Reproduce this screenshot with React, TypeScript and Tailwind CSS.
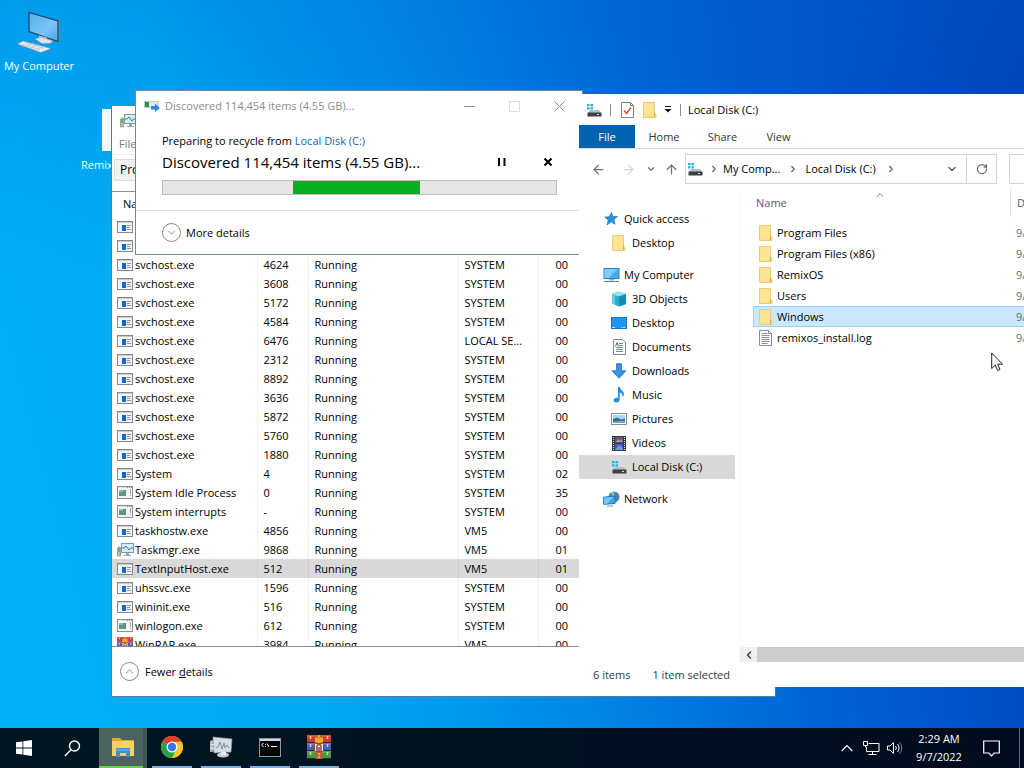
import type { ReactNode } from "react";
import { ArrowLeft, ArrowRight, ArrowUp, ChevronDown, ChevronLeft, ChevronRight, ChevronUp, RotateCw } from "lucide-react";

type ProcessKind = "app" | "service" | "monitor" | "winrar";

const processes: { name: string; pid: string; user: string; cpu: string; kind?: ProcessKind }[] = [
  { name: "svchost.exe", pid: "4624", user: "SYSTEM", cpu: "00" },
  { name: "svchost.exe", pid: "3608", user: "SYSTEM", cpu: "00" },
  { name: "svchost.exe", pid: "5172", user: "SYSTEM", cpu: "00" },
  { name: "svchost.exe", pid: "4584", user: "SYSTEM", cpu: "00" },
  { name: "svchost.exe", pid: "6476", user: "LOCAL SE...", cpu: "00" },
  { name: "svchost.exe", pid: "2312", user: "SYSTEM", cpu: "00" },
  { name: "svchost.exe", pid: "8892", user: "SYSTEM", cpu: "00" },
  { name: "svchost.exe", pid: "3636", user: "SYSTEM", cpu: "00" },
  { name: "svchost.exe", pid: "5872", user: "SYSTEM", cpu: "00" },
  { name: "svchost.exe", pid: "5760", user: "SYSTEM", cpu: "00" },
  { name: "svchost.exe", pid: "1880", user: "SYSTEM", cpu: "00" },
  { name: "System", pid: "4", user: "SYSTEM", cpu: "02" },
  { name: "System Idle Process", pid: "0", user: "SYSTEM", cpu: "35", kind: "service" },
  { name: "System interrupts", pid: "-", user: "SYSTEM", cpu: "00", kind: "service" },
  { name: "taskhostw.exe", pid: "4856", user: "VM5", cpu: "00" },
  { name: "Taskmgr.exe", pid: "9868", user: "VM5", cpu: "01", kind: "monitor" },
  { name: "TextInputHost.exe", pid: "512", user: "VM5", cpu: "01" },
  { name: "uhssvc.exe", pid: "1596", user: "SYSTEM", cpu: "00" },
  { name: "wininit.exe", pid: "516", user: "SYSTEM", cpu: "00" },
  { name: "winlogon.exe", pid: "612", user: "SYSTEM", cpu: "00", kind: "service" },
  { name: "WinRAR.exe", pid: "3984", user: "VM5", cpu: "00", kind: "winrar" },
];

/* ---------- icons ---------- */

function AppIcon() {
  return (
    <svg width="16" height="12" viewBox="0 0 16 12" shapeRendering="crispEdges">
      <rect width="16" height="12" fill="#84898d" />
      <rect x="1" y="1" width="14" height="10" fill="#f3f5f6" />
      <rect x="1" y="1" width="14" height="1" fill="#c9cdd0" />
      <rect x="5" y="4" width="4" height="6" fill="#1268c8" />
      <path d="M10 4.5h4M10 6.5h3M10 8.5h4" stroke="#8c9196" />
    </svg>
  );
}

function ServiceIcon() {
  return (
    <svg width="16" height="13" viewBox="0 0 16 13" shapeRendering="crispEdges">
      <rect width="16" height="13" fill="#8b8f92" />
      <rect x="1" y="2" width="14" height="10" fill="#f4f6f5" />
      <path d="M1 1.5h9M11 1.5h1M13 1.5h1" stroke="#dfe3e4" />
      <rect x="2" y="4" width="7" height="6" fill="#5c9482" />
      <rect x="2" y="4" width="4" height="2" fill="#8fb9a8" />
      <path d="M13.5 3v5M13.5 9v1" stroke="#9ca0a2" />
    </svg>
  );
}

function MonitorIcon() {
  return (
    <svg width="17" height="15" viewBox="0 0 17 15">
      <rect x="4.5" y="1.5" width="12" height="9" fill="#d6f0f6" stroke="#8797a3" />
      <path d="M5 6h2l2-2 3 4 1.500-2H16" fill="none" stroke="#2684b0" />
      <path d="M9 11h3v2h2v1H7v-1h2z" fill="#98a5ad" />
      <path d="M.5 14V6l2-1.500 1 1V14z" fill="#a9c9a0" stroke="#73926f" strokeWidth=".7" />
      <path d="M1 7h2M1 9h2" stroke="#4a8b45" />
    </svg>
  );
}

function WinrarIcon({ size }: { size: number }) {
  return (
    <svg width={size} height={size} viewBox="0 0 24 24">
      <rect width="24" height="7" fill="#d8372f" />
      <rect y="8" width="24" height="7" fill="#4a5cc0" />
      <rect y="16" width="24" height="7" fill="#3f9a44" />
      <path d="M0 1h24M0 9h24M0 17h24" stroke="#fff" strokeOpacity=".3" />
      <path d="M0 7.500h24M0 15.500h24M0 23.500h24" stroke="#3a2430" />
      <path d="M3.500 1v22" stroke="#e6cfa0" strokeWidth="1.500" strokeDasharray="3 5" />
      <path d="M20.500 1v22" stroke="#e6cfa0" strokeWidth="1.500" strokeDasharray="3 5" />
      <rect x="8.500" width="7" height="24" fill="#b8642f" />
      <path d="M12 0v24" stroke="#f0c05a" strokeWidth="1.500" strokeDasharray="2 1" />
      <path d="M8 2.500h8v5H8z" fill="#f5a52a" />
      <rect x="7.500" y="8.500" width="9" height="8" rx="1" fill="#f6ead2" stroke="#8a4a2a" />
      <path d="M10 16v-4.500a2 2 0 0 1 4 0V16" fill="none" stroke="#b5402a" strokeWidth="1.500" />
      <path d="M12 12v4" stroke="#4d5b8c" strokeWidth="1.500" />
    </svg>
  );
}

function FolderIcon() {
  return (
    <svg width="14" height="16" viewBox="0 0 14 16">
      <path d="M.5.5h11v11l1.500.8v3.200H.5z" fill="#fbdf85" stroke="#ebcb74" />
      <path d="M1 1h10v12L1 15z" fill="#fde594" />
      <path d="M11.500 15v-4.500" stroke="#dcae45" />
    </svg>
  );
}

function DiskIcon() {
  return (
    <svg width="16" height="14" viewBox="0 0 16 14">
      <path d="M1 1h2.500v2.300H1zM4.500 1H7v2.300H4.500zM1 4.300h2.500v2.300H1zM4.500 4.300H7v2.300H4.500z" fill="#1fb4dc" />
      <path d="M4 7h9l2 3H2z" fill="#b9bdc0" />
      <rect x="1.500" y="9.500" width="14" height="4" rx=".5" fill="#3a4045" />
      <rect x="11" y="11" width="2" height="1" fill="#d5dade" />
    </svg>
  );
}

function CheckDocIcon() {
  return (
    <svg width="13" height="16" viewBox="0 0 13 16">
      <path d="M.5.5h9l3 3v12H.5z" fill="#fff" stroke="#7e8285" />
      <path d="M9.500.5v3h3" fill="none" stroke="#7e8285" />
      <path d="M3 8.500l2.500 3 4.500-6" fill="none" stroke="#cf5b3c" strokeWidth="1.500" />
    </svg>
  );
}

function TextFileIcon() {
  return (
    <svg width="13" height="16" viewBox="0 0 13 16">
      <path d="M.5.5h9l3 3v12H.5z" fill="#fbfbfb" stroke="#8b8f92" />
      <path d="M9.500.5v3h3" fill="none" stroke="#8b8f92" />
      <path d="M2.500 3.500h6M2.500 5.500h8M2.500 7.500h8M2.500 9.500h8M2.500 11.500h8M2.500 13.500h6" stroke="#8b9196" />
    </svg>
  );
}

function CopyIcon() {
  return (
    <svg width="16" height="12" viewBox="0 0 16 12">
      <rect x=".5" y="1.500" width="14" height="6" fill="#e5e9ea" stroke="#c5cacd" />
      <rect x="1" y="2" width="4" height="5" fill="#1f9c43" />
      <path d="M7 6h4V3.500l5 4.500-5 4V9.500H7z" fill="#2f86d6" />
    </svg>
  );
}

function StarIcon() {
  return (
    <svg width="14" height="14" viewBox="0 0 14 14">
      <path d="M7.500.5l1.300 4 4.700.1-3.500 2.900 1 4.800L7.200 9.800 3 13l1.300-5L.7 5.200l4.600-.5z" fill="#2493dc" stroke="#1877bb" strokeWidth=".7" />
    </svg>
  );
}

function ComputerIcon() {
  return (
    <svg width="17" height="16" viewBox="0 0 17 16">
      <rect x="1" y="1.500" width="15" height="10" fill="#45adef" stroke="#3b7ea8" />
      <path d="M1.500 2h13L6 11H1.500z" fill="#7cccf8" />
      <path d="M6 12h5v1.500H6z" fill="#a4b0b8" />
      <path d="M1 14.500h15" stroke="#55839f" />
    </svg>
  );
}

function CubeIcon() {
  return (
    <svg width="16" height="16" viewBox="0 0 16 16">
      <path d="M1 3l6-2.500L15 3v10l-7 2.500-7-3z" fill="#26b0cf" />
      <path d="M1 3l6-2.500L15 3 8 5.500z" fill="#93e4ee" />
      <path d="M8 5.500L15 3v10l-7 2.500z" fill="#178daf" />
      <path d="M1 3l3 1v9.500l-3-1z" fill="#5fd0e1" />
    </svg>
  );
}

function DesktopIcon() {
  return (
    <svg width="16" height="12" viewBox="0 0 16 12">
      <rect x=".5" y=".5" width="15" height="11" fill="#1e96ef" stroke="#1479cf" />
      <path d="M1 10.500h3M10 10.500h1M12 10.500h2" stroke="#bfe2fb" />
    </svg>
  );
}

function DocumentsIcon() {
  return (
    <svg width="13" height="16" viewBox="0 0 13 16">
      <path d="M.5.5h9l3 3v12H.5z" fill="#fff" stroke="#7d8b95" />
      <path d="M6 4.500h4M6 6.500h4M3 8.500h7M3 10.500h7M3 12.500h7" stroke="#5b93b5" />
      <path d="M2.500 7.500l1.500-4 1.500 4" fill="none" stroke="#3a7896" />
    </svg>
  );
}

function DownloadIcon() {
  return (
    <svg width="16" height="16" viewBox="0 0 16 16">
      <path d="M5.500.7h5v7H15L8 15.300.9 7.700h4.600z" fill="#3a91de" stroke="#2173bd" strokeWidth=".8" />
    </svg>
  );
}

function MusicIcon() {
  return (
    <svg width="12" height="16" viewBox="0 0 12 16">
      <path d="M5 0h1.700c.3 3 4.300 4 4.300 7 0 1.500-.8 2.500-1.500 3 .5-2.500-1-4-2.800-4.500V12.500c0 1.700-1.500 3-3.400 3S.5 14.500.5 13.300c0-1.500 1.600-2.600 3.300-2.600.5 0 .9.100 1.200.2z" fill="#1e8fe6" />
    </svg>
  );
}

function PicturesIcon() {
  return (
    <svg width="16" height="12" viewBox="0 0 16 12">
      <rect x=".5" y=".5" width="15" height="11" fill="#fff" stroke="#868e94" />
      <rect x="2" y="2" width="12" height="8" fill="#a9d7f2" />
      <path d="M2 6l4-1.500 4 2 4-1V10H2z" fill="#3a6d93" />
      <path d="M2 8.500l12-1V10H2z" fill="#6fa8cf" />
    </svg>
  );
}

function VideosIcon() {
  return (
    <svg width="14" height="15" viewBox="0 0 14 15">
      <rect width="14" height="15" fill="#33363b" />
      <path d="M1.500 1v14M12.500 1v14" stroke="#e6e6e6" strokeDasharray="1 1" />
      <rect x="3" y="1" width="8" height="6" fill="#5d5480" />
      <rect x="3" y="8" width="8" height="6" fill="#3b62b5" />
      <path d="M4 6l2-3 2 2 2-2v3z" fill="#c9a23e" />
      <path d="M3 14l4-5 4 3v2z" fill="#6f97dc" />
    </svg>
  );
}

function NetworkIcon() {
  return (
    <svg width="17" height="16" viewBox="0 0 17 16">
      <circle cx="11" cy="6" r="5.500" fill="#4787a8" />
      <path d="M8 2c2-1 3 1 2 3" fill="none" stroke="#a5d2bd" strokeWidth="1.500" />
      <path d="M.7 6.200L12 5v7.500L.7 13.300z" fill="#3aa5e8" stroke="#1c74b4" />
      <path d="M1.200 6.700l9-.9-6 6.900-3 .2z" fill="#74c8f7" />
      <path d="M4 15h6" stroke="#5da3cd" />
    </svg>
  );
}

function DesktopComputerIcon() {
  return (
    <svg width="44" height="44" viewBox="0 0 44 44">
      <defs>
        <linearGradient id="screen" x1="0" y1="0" x2="1" y2="1">
          <stop offset="0" stopColor="#4fb0f2" />
          <stop offset=".6" stopColor="#7cc4f8" />
          <stop offset="1" stopColor="#46a4ec" />
        </linearGradient>
      </defs>
      <path d="M40 10l2.500.8V31l-2.500.8z" fill="#8d8578" />
      <path d="M12 2.500L41 11v20.500L12 21.500z" fill="url(#screen)" stroke="#23405c" strokeWidth="1.200" />
      <path d="M22 25.500l8 2v3l-8-1z" fill="#b9c2ca" />
      <path d="M18 29l6-2 12 4-3 2.500H25z" fill="#dde2e6" stroke="#8f9ba5" strokeWidth=".5" />
      <path d="M6 31L34 38.500 24 42.500.5 34z" fill="#eceff1" stroke="#8793a0" strokeWidth=".6" />
      <path d="M5 34l18 6M8 32.500l19 6M9 36l8-3.500M14 38l8-3.500M19 40l8-3.500" stroke="#b3bbc2" strokeWidth=".7" />
    </svg>
  );
}

function ExplorerIcon() {
  return (
    <svg width="24" height="20" viewBox="0 0 24 20">
      <path d="M1 1h8l2 2h12v4H1z" fill="#e9a42a" />
      <path d="M1 4h22v15H1z" fill="#fbd25f" />
      <path d="M6 11h12a1 1 0 0 1 1 1v8h-4v-4H9v4H5v-8a1 1 0 0 1 1-1z" fill="#3f8fd0" />
      <path d="M5 12h14v2H5z" fill="#5aaae4" />
    </svg>
  );
}

function ChromeIcon() {
  return (
    <svg width="24" height="24" viewBox="0 0 24 24">
      <circle cx="12" cy="12" r="11" fill="#f9c623" />
      <path d="M12 12L2.500 6.500A11 11 0 0 1 21.500 6.500L12 7z" fill="#e33b2e" />
      <path d="M12 12L2.470 6.500A11 11 0 0 0 12 23l4-8z" fill="#27a04c" />
      <path d="M12 7h9.800A11 11 0 0 1 12 23l4.300-8.500z" fill="#f9c623" />
      <circle cx="12" cy="12" r="5.500" fill="#fff" />
      <circle cx="12" cy="12" r="4.200" fill="#3577e6" />
    </svg>
  );
}

function TaskManagerIcon() {
  return (
    <svg width="24" height="22" viewBox="0 0 24 22">
      <path d="M1 5l8-3v13l-8 1z" fill="#aeb9c1" />
      <path d="M4 1l19 2-1 13-17 1z" fill="#d5dde2" stroke="#8d9aa4" strokeWidth=".7" />
      <path d="M7 12l2-1 2-5 2 7 2-6 1 5 2-3 2 3" fill="none" stroke="#7890a2" />
      <ellipse cx="14" cy="19" rx="6" ry="2.500" fill="#c6ced4" />
      <path d="M12 16h5v3h-5z" fill="#e7ecef" />
      <path d="M1 12l4 .5M1 9l4-.5" stroke="#e9eef1" />
    </svg>
  );
}

function ConsoleIcon() {
  return (
    <svg width="22" height="19" viewBox="0 0 22 19">
      <rect x=".5" y=".5" width="21" height="18" fill="#050505" stroke="#8f959a" />
      <rect x="1" y="1" width="20" height="2" fill="#cfd5d9" />
      <path d="M4.500 5.500C2.500 5 2.500 9 4.500 8.500M6.500 6v.8M6.500 8v.8M8 5.500l2 3.500M12 8.500h6" fill="none" stroke="#fff" />
    </svg>
  );
}

function ProcessIcon({ kind = "app" }: { kind?: ProcessKind }) {
  if (kind === "service") return <ServiceIcon />;
  if (kind === "monitor") return <MonitorIcon />;
  if (kind === "winrar") return <WinrarIcon size={16} />;
  return <AppIcon />;
}

/* ---------- desktop ---------- */

function DesktopShortcuts() {
  return (
    <>
      <button className="absolute left-0 top-[10px] flex w-[78px] flex-col items-center gap-1 text-white">
        <DesktopComputerIcon />
        <span className="whitespace-nowrap leading-4">My Computer</span>
      </button>
      <button aria-label="RemixOS" className="absolute left-[81px] top-[109px] flex w-[80px] flex-col gap-1.5 text-left text-white">
        <span className="ml-[21px] h-[42px] w-[38px] bg-[#f6f8fa]" />
        <span className="leading-4">Remix</span>
      </button>
    </>
  );
}

function TaskManager() {
  return (
    <section aria-label="Task Manager" className="absolute left-[111px] top-[105px] flex h-[592px] w-[665px] flex-col overflow-hidden border border-[#4f7f9f] bg-white">
      <header className="flex h-[29px] items-center px-2">
        <MonitorIcon />
      </header>
      <nav className="flex h-[20px] items-center border-b border-[#ececec] px-[7px] text-[#777]">
        <button>File</button>
      </nav>
      <div className="flex h-[37px] items-start border-b border-[#8d8d8d] px-0.5 pt-1">
        <button className="h-[22px] border border-[#dcdcdc] bg-[#f2f2f2] px-[5px] text-[12px]">Processes</button>
      </div>
      <div className="min-h-0 flex-1 overflow-hidden border-b border-[#8d8d8d]">
        <table className="w-full table-fixed border-collapse">
          <colgroup>
            <col className="w-[145px]" />
            <col className="w-[51px]" />
            <col className="w-[150px]" />
            <col className="w-[80px]" />
            <col className="w-[36px]" />
            <col />
          </colgroup>
          <thead>
            <tr className="h-[25px] text-left">
              <th className="p-0 pl-[11px] font-normal">Name</th>
              <th aria-label="PID" />
              <th aria-label="Status" />
              <th aria-label="User name" />
              <th aria-label="CPU" />
              <th />
            </tr>
          </thead>
          <tbody>
            {/* the two rows the progress dialog sits on */}
            {[0, 1].map((row) => (
              <tr key={row} className="h-[19px]">
                <td colSpan={6} className="p-0 pl-[5px]"><AppIcon /></td>
              </tr>
            ))}
            {processes.map((process) => (
              <tr key={process.pid} className={process.name === "TextInputHost.exe" ? "h-[19px] bg-[#d9d9d9]" : "h-[19px]"}>
                <td className="border-r border-black/5 p-0 pl-[5px]">
                  <div className="flex h-[19px] items-center overflow-hidden whitespace-nowrap">
                    <span className="flex w-[18px] shrink-0"><ProcessIcon kind={process.kind} /></span>
                    <span className="pt-0.5">{process.name}</span>
                  </div>
                </td>
                <td className="border-r border-black/5 p-0 pl-1.5 pt-0.5">{process.pid}</td>
                <td className="border-r border-black/5 p-0 pl-1.5 pt-0.5">Running</td>
                <td className="whitespace-nowrap border-r border-black/5 p-0 pl-1.5 pt-0.5">{process.user}</td>
                <td className="p-0 pr-1.5 pt-0.5 text-right">{process.cpu}</td>
                <td />
              </tr>
            ))}
          </tbody>
        </table>
      </div>
      <footer className="flex h-[49px] items-center px-2">
        <button className="flex items-center gap-1.5">
          <span className="flex size-[19px] items-center justify-center rounded-full border border-[#8a8a8a] text-[#777]">
            <ChevronUp size={13} strokeWidth={1.5} />
          </span>
          <span className="pt-px">Fewer <u>d</u>etails</span>
        </button>
      </footer>
    </section>
  );
}

function RecycleDialog() {
  return (
    <section className="absolute left-[135px] top-[90px] flex w-[448px] flex-col border border-[#6f8797] bg-white">
      <header className="flex h-[30px] items-center pl-2">
        <CopyIcon />
        <span className="ml-[5px] flex-1 text-[#8b8b8b]">Discovered 114,454 items (4.55 GB)...</span>
        <button aria-label="Minimize" className="flex w-[45px] justify-center">
          <svg width="11" height="11" viewBox="0 0 11 11"><path d="M0 5.500h11" stroke="#8c8c8c" /></svg>
        </button>
        <button aria-label="Maximize" className="flex w-[45px] justify-center" disabled>
          <svg width="11" height="11" viewBox="0 0 11 11"><path d="M.5.5h10v10H.5z" fill="none" stroke="#dedede" /></svg>
        </button>
        <button aria-label="Close" className="flex w-[45px] justify-center">
          <svg width="11" height="11" viewBox="0 0 11 11"><path d="M.5.5l10 10M10.500.5l-10 10" stroke="#8c8c8c" /></svg>
        </button>
      </header>
      <div className="flex h-[90px] flex-col border-b border-[#dfdfdf] px-[26px] pt-3">
        <p className="leading-4">
          Preparing to recycle from <a href="#local-disk" className="text-[#1a63b0]">Local Disk (C:)</a>
        </p>
        <div className="flex h-[25px] items-center">
          <p className="flex-1 text-[15px] leading-5">Discovered 114,454 items (4.55 GB)...</p>
          <button aria-label="Pause" className="mr-9">
            <svg width="10" height="10" viewBox="0 0 10 10"><path d="M2 1v8M7.500 1v8" stroke="#000" strokeWidth="2" /></svg>
          </button>
          <button aria-label="Cancel" className="mr-[3px]">
            <svg width="10" height="10" viewBox="0 0 10 10"><path d="M1.500 1.500l7 7M8.500 1.500l-7 7" stroke="#000" strokeWidth="2" /></svg>
          </button>
        </div>
        <div role="progressbar" aria-label="Recycling" className="mt-1.5 h-[15px] w-[395px] border border-[#bcbcbc] bg-[#e6e6e6]">
          <div className="ml-[130px] h-full w-[127px] bg-[#06b025]" />
        </div>
      </div>
      <div className="flex h-[43px] items-center px-[26px]">
        <button className="flex items-center gap-[5px]">
          <span className="flex size-[19px] items-center justify-center rounded-full border border-[#8a8a8a] text-[#777]">
            <ChevronDown size={13} strokeWidth={1.5} />
          </span>
          <span className="pt-0.5">More details</span>
        </button>
      </div>
    </section>
  );
}

const places: { label: string; icon: ReactNode; root?: boolean; selected?: boolean }[] = [
  { label: "Quick access", icon: <StarIcon />, root: true },
  { label: "Desktop", icon: <FolderIcon /> },
  { label: "My Computer", icon: <ComputerIcon />, root: true },
  { label: "3D Objects", icon: <CubeIcon /> },
  { label: "Desktop", icon: <DesktopIcon /> },
  { label: "Documents", icon: <DocumentsIcon /> },
  { label: "Downloads", icon: <DownloadIcon /> },
  { label: "Music", icon: <MusicIcon /> },
  { label: "Pictures", icon: <PicturesIcon /> },
  { label: "Videos", icon: <VideosIcon /> },
  { label: "Local Disk (C:)", icon: <DiskIcon />, selected: true },
  { label: "Network", icon: <NetworkIcon />, root: true },
];

const files = ["Program Files", "Program Files (x86)", "RemixOS", "Users", "Windows", "remixos_install.log"];

function PlaceItem({ label, icon, root, selected }: (typeof places)[number]) {
  return (
    <li className={root ? "pt-2 first:pt-0" : ""}>
      <button
        className={`flex h-6 w-full items-center text-left ${root ? "pl-[23px]" : "pl-[31px]"} ${selected ? "bg-[#d9d9d9]" : ""}`}
      >
        <span className="mr-1 flex w-[18px] justify-center">{icon}</span>
        {label}
      </button>
    </li>
  );
}

function ExplorerWindow() {
  return (
    <section className="absolute left-[579px] right-0 top-[94px] flex h-[593px] flex-col overflow-hidden bg-white">
      <header className="flex h-[31px] shrink-0 items-center pl-[7px]">
        <DiskIcon />
        <span className="ml-2 h-3 w-px bg-[#8a8a8a]" />
        <button aria-label="Properties" className="ml-[10px]"><CheckDocIcon /></button>
        <button aria-label="New folder" className="ml-[9px]"><FolderIcon /></button>
        <button aria-label="Customize toolbar" className="ml-[7px]">
          <svg width="8" height="8" viewBox="0 0 8 8"><path d="M1 .5h6" stroke="#111" /><path d="M.5 3h7L4 6.500z" fill="#111" /></svg>
        </button>
        <span className="ml-2 h-3 w-px bg-[#8a8a8a]" />
        <span className="ml-[7px] pt-px">Local Disk (C:)</span>
      </header>

      <nav className="flex h-6 shrink-0 items-stretch border-b border-[#dadbdc] text-[#333]">
        <button className="w-14 bg-[#0063b1] pt-0.5 text-white">File</button>
        <button className="w-[58px] pt-0.5">Home</button>
        <button className="w-[59px] pt-0.5">Share</button>
        <button className="w-[53px] pt-0.5">View</button>
      </nav>

      <div className="flex h-10 shrink-0 items-center text-[#707070]">
        <button aria-label="Back" className="ml-3"><ArrowLeft size={15} /></button>
        <button aria-label="Forward" className="ml-[15px] text-[#d5d5d5]"><ArrowRight size={15} /></button>
        <button aria-label="Recent locations" className="ml-2.5"><ChevronDown size={10} strokeWidth={3} /></button>
        <button aria-label="Up" className="ml-2"><ArrowUp size={15} /></button>
        <div className="ml-1.5 flex h-[30px] w-[312px] shrink-0 items-center border border-[#d4d4d4] pl-px text-black">
          <DiskIcon />
          <ChevronRight size={10} strokeWidth={3} className="ml-1.5 text-[#666]" />
          <button className="ml-1">My Comp...</button>
          <ChevronRight size={10} strokeWidth={3} className="ml-2 text-[#666]" />
          <button className="ml-[7px]">Local Disk (C:)</button>
          <ChevronRight size={10} strokeWidth={3} className="ml-2.5 text-[#666]" />
          <button aria-label="Previous locations" className="ml-auto mr-2 text-[#666]"><ChevronDown size={12} strokeWidth={3} /></button>
          <button aria-label="Refresh" className="flex h-full w-[30px] items-center justify-center border-l border-[#d4d4d4] text-[#666]">
            <RotateCw size={12} strokeWidth={2.5} />
          </button>
        </div>
        <input aria-label="Search Local Disk (C:)" className="ml-3 h-[30px] min-w-0 flex-1 border border-r-0 border-[#d4d4d4]" />
      </div>

      <div className="flex min-h-0 flex-1">
        <ul className="w-[156px] shrink-0 pt-[18px]">
          {places.map((place, index) => (
            <PlaceItem key={index} {...place} />
          ))}
        </ul>
        <div className="ml-1 flex min-w-0 flex-1 flex-col border-l border-[#f7f7f7]">
          <div className="min-h-0 flex-1 overflow-hidden pl-[13px]">
            <table className="w-full table-fixed border-separate border-spacing-0">
              <colgroup>
                <col className="w-[257px]" />
                <col />
              </colgroup>
              <thead>
                <tr className="h-[28px] text-left text-[#4c607a]">
                  <th className="relative p-0 pl-[3px] pt-px font-normal">
                    Name
                    <ChevronUp size={12} strokeWidth={1.5} className="absolute left-[121px] top-0 text-[#555]" />
                  </th>
                  <th className="overflow-hidden whitespace-nowrap border-l border-[#e3e3e3] p-0 pl-1.5 pt-px font-normal">Date modified</th>
                </tr>
                <tr className="h-[5px]" />
              </thead>
              <tbody>
                {files.map((file) => {
                  const cell = file === "Windows" ? "border-y border-[#99d1ff] bg-[#cce8ff]" : "border-y border-transparent";
                  return (
                    <tr key={file} className="h-[21px]">
                      <td className={`p-0 ${cell} ${file === "Windows" ? "border-l" : "border-l border-l-transparent"}`}>
                        <button className="flex h-[19px] items-center pl-[5px]">
                          <span className="flex w-[18px]">{file.endsWith(".log") ? <TextFileIcon /> : <FolderIcon />}</span>
                          <span className="pt-0.5">{file}</span>
                        </button>
                      </td>
                      <td className={`overflow-hidden whitespace-nowrap p-0 pl-1.5 pt-0.5 text-[#6d6d6d] ${cell}`}>9/7/2022</td>
                    </tr>
                  );
                })}
              </tbody>
            </table>
          </div>
          <div className="flex h-[15px] bg-[#f0f0f0]">
            <button aria-label="Scroll left" className="flex w-[17px] items-center justify-center text-[#444]">
              <ChevronLeft size={12} strokeWidth={3} />
            </button>
            <div className="flex-1 bg-[#cdcdcd]" />
          </div>
        </div>
      </div>

      <footer className="flex h-[25px] shrink-0 items-center gap-[22px] pl-3.5 pt-0.5 text-[#2b3a55]">
        <span>6 items</span>
        <span>1 item selected</span>
      </footer>
    </section>
  );
}

function TaskbarApp({ label, children }: { label: string; children: ReactNode }) {
  return (
    <button aria-label={label} className="flex h-full w-[49px] flex-col items-center">
      <span className="flex flex-1 items-center">{children}</span>
      <span className="h-0.5 w-10 bg-[#76b0e6]" />
    </button>
  );
}

function Taskbar() {
  return (
    <footer className="absolute inset-x-0 bottom-0 flex h-10 items-center bg-linear-to-r from-[#001722] to-[#000a1e] text-white">
      <button aria-label="Start" className="flex w-12 justify-center">
        <svg width="16" height="16" viewBox="0 0 16 16" fill="#fff">
          <path d="M0 2.300L6.500 1.400v6.200H0zM7.300 1.300L16 0v7.600H7.300zM0 8.400h6.500v6.200L0 13.700zM7.300 8.400H16V16l-8.700-1.300z" />
        </svg>
      </button>
      <button aria-label="Search" className="flex w-12 justify-center">
        <svg width="17" height="17" viewBox="0 0 17 17" fill="none" stroke="#fff" strokeWidth="1.400">
          <circle cx="10.500" cy="6" r="5" />
          <path d="M7 9.800L.8 16" />
        </svg>
      </button>
      <button aria-label="File Explorer" className="ml-[3px] flex h-full w-12 flex-col border-r-4 border-[#3b5550] bg-[#4c6360]">
        <span className="flex flex-1 items-center justify-center pl-1"><ExplorerIcon /></span>
        <span className="h-0.5 w-full bg-[#5edb3a]" />
      </button>
      <TaskbarApp label="Google Chrome"><ChromeIcon /></TaskbarApp>
      <TaskbarApp label="Task Manager"><TaskManagerIcon /></TaskbarApp>
      <TaskbarApp label="Command Prompt"><ConsoleIcon /></TaskbarApp>
      <TaskbarApp label="WinRAR"><WinrarIcon size={24} /></TaskbarApp>

      <div className="ml-auto flex h-full items-center">
        <button aria-label="Show hidden icons">
          <svg width="12" height="8" viewBox="0 0 12 8"><path d="M.7 7L6 1.500 11.300 7" fill="none" stroke="#fff" strokeWidth="1.200" /></svg>
        </button>
        <button aria-label="Network" className="ml-2.5">
          <svg width="17" height="14" viewBox="0 0 17 14" fill="none" stroke="#fff">
            <path d="M5.500 2.500h10.500v8H3.500V6M9.500 10.500v3M5.500 13.500h8" />
            <path d="M.5.500h4v4h-4zM2.500 4.500v1.500h1" />
          </svg>
        </button>
        <button aria-label="Volume" className="ml-[7px]">
          <svg width="17" height="14" viewBox="0 0 17 14" fill="none" stroke="#fff">
            <path d="M.5 5h2.500l3.500-3.500v11L3 9H.5z" />
            <path d="M8.500 5a3 3 0 0 1 0 4M10.500 3a6 6 0 0 1 0 8" />
            <path d="M12.700 1.300a9 9 0 0 1 0 11.400" stroke="#777f8c" />
          </svg>
        </button>
        <button className="ml-2 w-[54px] text-center leading-[18px]">
          <div>2:29 AM</div>
          <div>9/7/2022</div>
        </button>
        <button aria-label="Notifications" className="ml-[17px]">
          <svg width="17" height="17" viewBox="0 0 17 17"><path d="M.7 1h15.600v12H11l-2.500 2.800L6 13H.7z" fill="none" stroke="#fff" strokeWidth="1.200" /></svg>
        </button>
        <span className="ml-[19px] mr-1 h-full w-px bg-[#5a6472]" />
      </div>
    </footer>
  );
}

function Cursor() {
  return (
    <svg className="absolute left-[991px] top-[352px]" width="12" height="20" viewBox="0 0 12 20">
      <path d="M.7 1v15.500l3.600-3.400 2.300 5.400 2.400-1-2.300-5.300h4.800z" fill="#fff" stroke="#222" />
    </svg>
  );
}

export default function App() {
  return (
    <main className="relative h-screen w-full overflow-hidden bg-[linear-gradient(to_bottom,rgba(0,110,215,0.25),transparent_35%),linear-gradient(75deg,#00b2fa_0%,#00a9f3_28%,#0094ec_42%,#0067d6_66%,#004cc4_84%,#003cb2_100%)] font-['Open_Sans','Noto_Sans',sans-serif] text-[11px] text-black">
      <DesktopShortcuts />
      <TaskManager />
      <RecycleDialog />
      <ExplorerWindow />
      <Taskbar />
      <Cursor />
    </main>
  );
}
